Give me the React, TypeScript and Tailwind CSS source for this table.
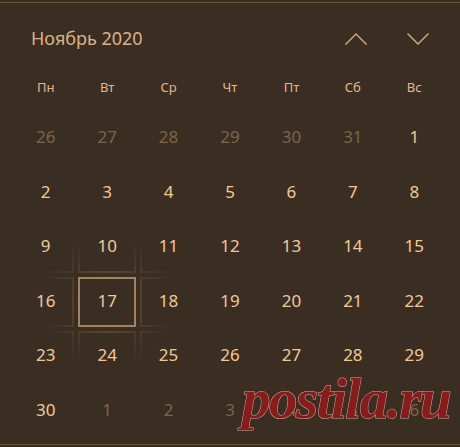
const weekdays = ["Пн", "Вт", "Ср", "Чт", "Пт", "Сб", "Вс"];

type Day = { n: number; muted?: boolean; selected?: boolean };

const days: Day[] = [
  ...[26, 27, 28, 29, 30, 31].map((n) => ({ n, muted: true })),
  ...Array.from({ length: 30 }, (_, i) => ({ n: i + 1, selected: i + 1 === 17 })),
  ...[1, 2, 3, 4, 5, 6].map((n) => ({ n, muted: true })),
];

function Chevron({ up }: { up?: boolean }) {
  return (
    <svg width="24" height="14" viewBox="0 0 24 14" fill="none" stroke="#d9ae7e" strokeWidth="1.4">
      {up ? <path d="M1.5 12.5 L12 2 L22.5 12.5" /> : <path d="M1.5 1.5 L12 12 L22.5 1.5" />}
    </svg>
  );
}

export default function App() {
  return (
    <div className="relative h-[447px] w-[460px] overflow-hidden bg-[#3a2e22] pt-[2px] font-['Segoe_UI','Noto_Sans',sans-serif]">
      <div className="h-[443px] border-y border-[#6b5338]">
        <div className="flex h-[71px] items-center justify-between pl-[31px] pr-[11px]">
          <span className="text-[18px] text-[#dcb285]">Ноябрь 2020</span>
          <div className="flex w-[124px]">
            <div className="flex w-[62px] justify-center">
              <Chevron up />
            </div>
            <div className="flex w-[62px] justify-center">
              <Chevron />
            </div>
          </div>
        </div>

        <div className="mx-[15px] grid h-[27px] grid-cols-7 items-center">
          {weekdays.map((d) => (
            <span key={d} className="text-center text-[13px] text-[#e3b98a]">
              {d}
            </span>
          ))}
        </div>

        <div className="relative mx-[15px] mt-[10px] grid grid-cols-7">
          {days.map((d, i) => (
            <div key={i} className="relative flex h-[54.6px] items-center justify-center pb-[3px]">
              {d.selected ? (
                <div className="absolute inset-[2px] border-2 border-[#a2835f]" />
              ) : null}
              <span className={`text-[17px] ${d.muted ? "text-[#7c654a]" : "text-[#f2c995]"}`}>{d.n}</span>
            </div>
          ))}

          <div className="pointer-events-none absolute inset-0 grid grid-cols-7 [mask-image:radial-gradient(circle_at_93px_191px,rgba(0,0,0,0.75)_0px,rgba(0,0,0,0.3)_32px,transparent_68px)]">
            {days.map((d, i) => (
              <div key={i} className="h-[54.6px] p-[2px]">
                {d.selected ? null : <div className="h-full w-full border-2 border-[#8c7150]" />}
              </div>
            ))}
          </div>
        </div>
      </div>

      <span className="pointer-events-none absolute left-[242px] top-[370px] font-['Liberation_Serif',serif] text-[57px] font-bold italic leading-none tracking-[-1.5px] text-[#8a1b1b] [-webkit-text-stroke:1px_#c9aaa0] [paint-order:stroke_fill]">
        postila.ru
      </span>
    </div>
  );
}
